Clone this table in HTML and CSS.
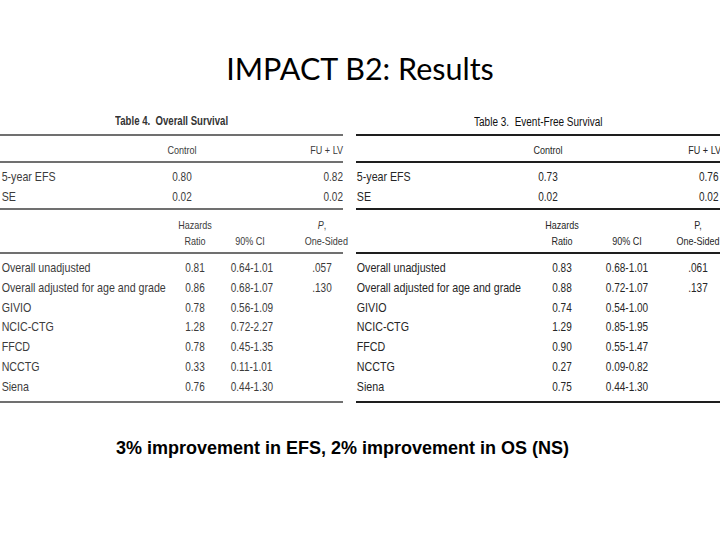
FILE: index.html
```html
<!DOCTYPE html>
<html>
<head>
<meta charset="utf-8">
<link rel="stylesheet" href="styles.css">
</head>
<body>
<div class="slide">
  <h1 class="title">IMPACT B2: Results</h1>
  <div class="tables">
    <div class="tbl left">
      <div class="cap"><span>Table 4.&nbsp; Overall Survival</span></div>
      <div class="sec1 head"><span></span><span class="c">Control</span><span class="rt">FU + LV</span></div>
      <div class="sec1body">
        <div class="sec1 row"><span>5-year EFS</span><span class="c">0.80</span><span class="rt">0.82</span></div>
        <div class="sec1 row"><span>SE</span><span class="c">0.02</span><span class="rt">0.02</span></div>
      </div>
      <div class="sec2 head2"><span></span><span class="c">Hazards<br>Ratio</span><span class="c bot">90% CI</span><span></span><span class="c"><i>P</i>,<br>One-Sided</span></div>
      <div class="sec2body">
        <div class="sec2 row"><span>Overall unadjusted</span><span class="c">0.81</span><span class="c">0.64-1.01</span><span></span><span class="c">.057</span></div>
        <div class="sec2 row"><span>Overall adjusted for age and grade</span><span class="c">0.86</span><span class="c">0.68-1.07</span><span></span><span class="c">.130</span></div>
        <div class="sec2 row"><span>GIVIO</span><span class="c">0.78</span><span class="c">0.56-1.09</span><span></span><span></span></div>
        <div class="sec2 row"><span>NCIC-CTG</span><span class="c">1.28</span><span class="c">0.72-2.27</span><span></span><span></span></div>
        <div class="sec2 row"><span>FFCD</span><span class="c">0.78</span><span class="c">0.45-1.35</span><span></span><span></span></div>
        <div class="sec2 row"><span>NCCTG</span><span class="c">0.33</span><span class="c">0.11-1.01</span><span></span><span></span></div>
        <div class="sec2 row"><span>Siena</span><span class="c">0.76</span><span class="c">0.44-1.30</span><span></span><span></span></div>
      </div>
    </div>
    <div class="tbl right">
      <div class="cap"><span>Table 3.&nbsp; Event-Free Survival</span></div>
      <div class="sec1 head"><span></span><span class="c">Control</span><span class="rt over">FU + LV</span></div>
      <div class="sec1body">
        <div class="sec1 row"><span>5-year EFS</span><span class="c">0.73</span><span class="rt">0.76</span></div>
        <div class="sec1 row"><span>SE</span><span class="c">0.02</span><span class="rt">0.02</span></div>
      </div>
      <div class="sec2 head2"><span></span><span class="c">Hazards<br>Ratio</span><span class="c bot">90% CI</span><span></span><span class="c pside">P,<br>One-Sided</span></div>
      <div class="sec2body">
        <div class="sec2 row"><span>Overall unadjusted</span><span class="c">0.83</span><span class="c">0.68-1.01</span><span></span><span class="c">.061</span></div>
        <div class="sec2 row"><span>Overall adjusted for age and grade</span><span class="c">0.88</span><span class="c">0.72-1.07</span><span></span><span class="c">.137</span></div>
        <div class="sec2 row"><span>GIVIO</span><span class="c">0.74</span><span class="c">0.54-1.00</span><span></span><span></span></div>
        <div class="sec2 row"><span>NCIC-CTG</span><span class="c">1.29</span><span class="c">0.85-1.95</span><span></span><span></span></div>
        <div class="sec2 row"><span>FFCD</span><span class="c">0.90</span><span class="c">0.55-1.47</span><span></span><span></span></div>
        <div class="sec2 row"><span>NCCTG</span><span class="c">0.27</span><span class="c">0.09-0.82</span><span></span><span></span></div>
        <div class="sec2 row"><span>Siena</span><span class="c">0.75</span><span class="c">0.44-1.30</span><span></span><span></span></div>
      </div>
    </div>
  </div>
  <p class="note">3% improvement in EFS, 2% improvement in OS (NS)</p>
</div>
</body>
</html>
```

FILE: styles.css
```css
html, body {
  margin: 0;
  padding: 0;
  background: #ffffff;
}
.slide {
  width: 720px;
  height: 540px;
  overflow: hidden;
  display: flex;
  flex-direction: column;
}
.title {
  margin: 0;
  height: 110px;
  box-sizing: border-box;
  padding-top: 50px;
  text-align: center;
  font-family: Lato, "Open Sans", sans-serif;
  font-weight: 400;
  font-size: 30.5px;
  line-height: 36px;
  color: #000;
}
.tables {
  display: flex;
  gap: 13px;
  font-family: "Liberation Sans", Arial, sans-serif;
  font-size: 12px;
}
.tbl.left { width: 343px; color: #3c3c3c; }
.tbl.right { width: 364px; color: #262626; }
.tbl.left > div { border-color: #707070; }
.tbl.right > div { border-color: #1e1e1e; }
.cap {
  height: 26px;
  box-sizing: border-box;
  line-height: 22px;
  text-align: center;
  border-bottom: 2px solid;
  font-weight: bold;
  white-space: nowrap;
}
.cap span {
  display: inline-block;
  transform: scaleX(0.8);
  transform-origin: center;
}
.left .cap { color: #333; }
.right .cap { font-weight: normal; font-size: 12.5px; color: #111; line-height: 24px; }
.sec1, .sec2 { display: grid; }
.sec1 > span, .sec2 > span {
  white-space: nowrap;
  transform: scaleX(0.82);
  transform-origin: left center;
}
.left .sec1 { grid-template-columns: 150px 64px 1fr; }
.right .sec1 { grid-template-columns: 158px 68px 1fr; }
.left .sec2 { grid-template-columns: 165px 60px 50px 1fr 42px; }
.right .sec2 { grid-template-columns: 180px 52px 78px 1fr 44px; }
.head {
  height: 27px;
  box-sizing: border-box;
  line-height: 28px;
  border-bottom: 2px solid;
  font-size: 11px;
}
.sec1body {
  height: 47px;
  padding-top: 4px;
  box-sizing: border-box;
  border-bottom: 2px solid;
}
.row { height: 20px; line-height: 20px; font-size: 13px; }
.row > span { transform: scaleX(0.77); }
.row > span:first-child { transform: scaleX(0.82); }
.left .row > span:first-child { padding-left: 2px; }
.right .row > span:first-child { padding-left: 1px; }
.head2 {
  height: 44px;
  box-sizing: border-box;
  padding-top: 7px;
  line-height: 16px;
  border-bottom: 2px solid;
  font-size: 11px;
}
.sec2body {
  height: 149px;
  box-sizing: border-box;
  padding-top: 4px;
  border-bottom: 2px solid;
}
.sec2body .row { height: 19.8px; line-height: 19.8px; }
.sec1 > .c, .sec2 > .c { text-align: center; transform-origin: center center; }
.sec1 > .rt, .sec2 > .rt { text-align: right; transform-origin: right center; }
.bot { padding-top: 16px; }
.right .rt { padding-right: 2px; }
.right .rt.over { margin-right: -1px; padding-right: 0; }
.right .sec2 > .pside {
  justify-self: end;
  text-align: center;
  transform-origin: right center;
}
.note {
  margin: 0;
  padding: 34px 0 0 116px;
  font-family: "Liberation Sans", Arial, sans-serif;
  font-weight: bold;
  font-size: 18px;
  line-height: 22px;
  color: #000;
}
```
